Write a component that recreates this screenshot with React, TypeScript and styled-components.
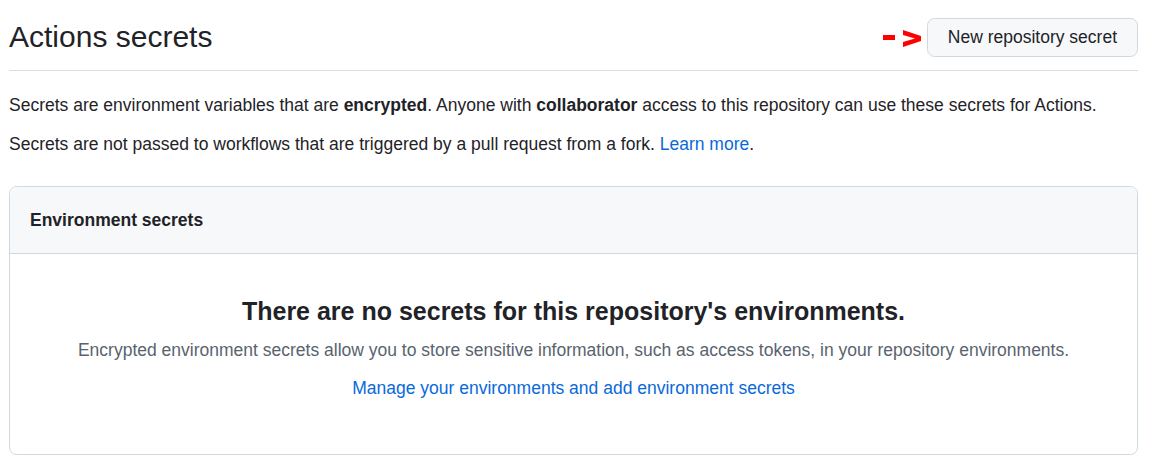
import React from "react";
import styled, { createGlobalStyle } from "styled-components";

const GlobalStyle = createGlobalStyle`
  html, body { margin: 0; padding: 0; background: #ffffff; }
  body {
    font-family: "Liberation Sans", Arial, sans-serif;
    color: #1f2328;
    font-size: 17.5px;
    line-height: 1.5;
  }
  * { box-sizing: border-box; }
`;

const Page = styled.div`
  padding: 0 15px 0 9px;
`;

const Header = styled.div`
  display: flex;
  align-items: center;
  justify-content: space-between;
  padding: 18px 0 12px;
  border-bottom: 1px solid #d8dee4;
`;

const Title = styled.h2`
  margin: 0;
  padding-bottom: 2px;
  font-size: 30px;
  font-weight: 400;
  line-height: 1.25;
`;

const Actions = styled.div`
  display: flex;
  align-items: center;
  gap: 5px;
`;

const Button = styled.button`
  height: 39px;
  padding: 0 20px;
  font-family: inherit;
  font-size: 17.5px;
  color: #1f2328;
  background: #f6f8fa;
  border: 1px solid #d1d9e0;
  border-radius: 7.5px;
  cursor: pointer;
`;

const Paragraph = styled.p<{ $gap: number }>`
  margin: 0 0 ${(p) => p.$gap}px;
`;

const Link = styled.a`
  color: #0969da;
  text-decoration: none;
`;

const Intro = styled.div`
  padding-top: 21px;
`;

const Box = styled.section`
  border: 1px solid #d1d9e0;
  border-radius: 7.5px;
  overflow: hidden;
`;

const BoxHeader = styled.div`
  background: #f6f8fa;
  padding: 20px 20px;
  border-bottom: 1px solid #d1d9e0;
  font-weight: 700;
`;

const Blankslate = styled.div`
  display: flex;
  flex-direction: column;
  align-items: center;
  text-align: center;
  padding: 39px 20px 53px;
`;

const BlankHeading = styled.h3`
  margin: 0 0 6px;
  font-size: 25px;
  font-weight: 700;
  line-height: 1.5;
`;

const BlankText = styled.p<{ $gap: number }>`
  margin: 0 0 ${(p) => p.$gap}px;
  color: #59636e;
`;

const Arrow = () => (
  <svg width="40" height="20" viewBox="0 0 40 20" aria-hidden="true">
    <rect x="1" y="7" width="12" height="5" fill="#ff0000" />
    <polygon points="21,2 39,8 39,13 21,19 21,14 33,10.5 21,7" fill="#ff0000" />
  </svg>
);

export default function App() {
  return (
    <>
      <GlobalStyle />
      <Page>
        <Header>
          <Title>Actions secrets</Title>
          <Actions>
            <Arrow />
            <Button>New repository secret</Button>
          </Actions>
        </Header>
        <Intro>
          <Paragraph $gap={13}>
            Secrets are environment variables that are <strong>encrypted</strong>. Anyone with{" "}
            <strong>collaborator</strong> access to this repository can use these secrets for Actions.
          </Paragraph>
          <Paragraph $gap={29}>
            Secrets are not passed to workflows that are triggered by a pull request from a fork.{" "}
            <Link href="#">Learn more</Link>.
          </Paragraph>
        </Intro>
        <Box>
          <BoxHeader>Environment secrets</BoxHeader>
          <Blankslate>
            <BlankHeading>There are no secrets for this repository's environments.</BlankHeading>
            <BlankText $gap={12}>
              Encrypted environment secrets allow you to store sensitive information, such as access
              tokens, in your repository environments.
            </BlankText>
            <Link href="#">Manage your environments and add environment secrets</Link>
          </Blankslate>
        </Box>
      </Page>
    </>
  );
}
